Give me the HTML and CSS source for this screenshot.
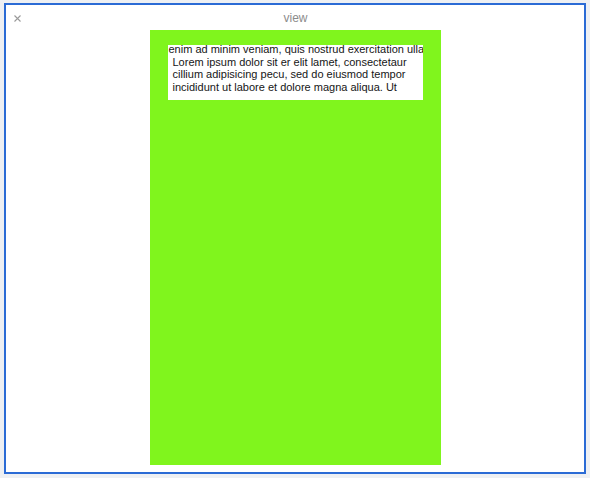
FILE: index.html
```html
<!DOCTYPE html>
<html>
<head>
<meta charset="utf-8">
<link rel="stylesheet" href="styles.css">
</head>
<body>
<div class="window">
  <div class="titlebar">
    <span class="close">
      <svg width="7" height="7" viewBox="0 0 7 7"><path d="M0.5 0.5 L6.5 6.5 M6.5 0.5 L0.5 6.5" stroke="#9a9a9a" stroke-width="1.1" fill="none"/></svg>
    </span>
    <span class="title">view</span>
    <span class="spacer"></span>
  </div>
  <div class="content">
    <div class="panel">
      <div class="textbox">
        <div class="line-scroll">enim ad minim veniam, quis nostrud exercitation ullamco laboris</div>
        <div class="para">Lorem ipsum dolor sit er elit lamet, consectetaur<br>cillium adipisicing pecu, sed do eiusmod tempor<br>incididunt ut labore et dolore magna aliqua. Ut</div>
      </div>
    </div>
  </div>
</div>
</body>
</html>
```
FILE: styles.css
```css
html, body {
  margin: 0;
  padding: 0;
}
body {
  width: 590px;
  height: 478px;
  background: #eef0f3;
  padding: 3px 4px 4px 4px;
  box-sizing: border-box;
  font-family: "Liberation Sans", Arial, sans-serif;
}
.window {
  width: 582px;
  height: 471px;
  box-sizing: border-box;
  border: 2px solid #2b6bd5;
  background: #ffffff;
  display: flex;
  flex-direction: column;
}
.titlebar {
  height: 25px;
  display: grid;
  grid-template-columns: 40px 1fr 40px;
  align-items: center;
}
.close {
  display: flex;
  padding-left: 8px;
  padding-top: 1px;
}
.title {
  text-align: center;
  font-size: 12px;
  color: #8c8c8c;
  padding-top: 1px;
  padding-left: 1px;
}
.content {
  flex: 1;
  display: flex;
  justify-content: center;
  padding-bottom: 7px;
}
.panel {
  width: 291px;
  background: #80f51d;
  padding: 15px 0 0 18px;
  box-sizing: border-box;
}
.textbox {
  width: 255px;
  height: 55px;
  background: #ffffff;
  overflow: hidden;
  font-size: 11px;
  line-height: 1.15;
  color: #161616;
}
.line-scroll {
  white-space: nowrap;
  margin-top: -2px;
  padding-left: 1px;
}
.para {
  white-space: nowrap;
  padding-left: 5px;
}
```
